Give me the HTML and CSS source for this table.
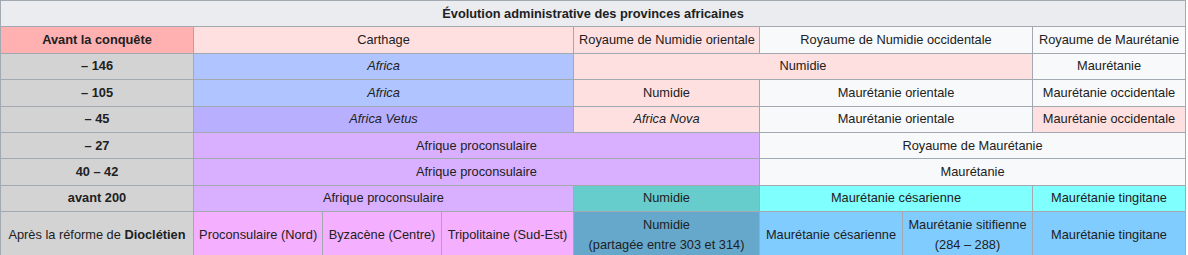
FILE: index.html
```html
<!DOCTYPE html>
<html lang="fr">
<head>
<meta charset="utf-8">
<title>Évolution administrative des provinces africaines</title>
<link rel="stylesheet" href="styles.css">
</head>
<body>
<table class="wikitable">
  <colgroup>
    <col class="c1"><col class="c2"><col class="c3"><col class="c4"><col class="c5"><col class="c6"><col class="c7"><col class="c8">
  </colgroup>
  <tr>
    <th colspan="8" class="head">Évolution administrative des provinces africaines</th>
  </tr>
  <tr>
    <th class="rose">Avant la conquête</th>
    <td colspan="3" class="pale">Carthage</td>
    <td class="pale">Royaume de Numidie orientale</td>
    <td colspan="2" class="white">Royaume de Numidie occidentale</td>
    <td class="white">Royaume de Maurétanie</td>
  </tr>
  <tr>
    <th class="gray">– 146</th>
    <td colspan="3" class="blue"><i>Africa</i></td>
    <td colspan="3" class="pale">Numidie</td>
    <td class="white">Maurétanie</td>
  </tr>
  <tr>
    <th class="gray">– 105</th>
    <td colspan="3" class="blue"><i>Africa</i></td>
    <td class="pale">Numidie</td>
    <td colspan="2" class="white">Maurétanie orientale</td>
    <td class="white">Maurétanie occidentale</td>
  </tr>
  <tr>
    <th class="gray">– 45</th>
    <td colspan="3" class="indigo"><i>Africa Vetus</i></td>
    <td class="pale"><i>Africa Nova</i></td>
    <td colspan="2" class="white">Maurétanie orientale</td>
    <td class="pale">Maurétanie occidentale</td>
  </tr>
  <tr>
    <th class="gray">– 27</th>
    <td colspan="4" class="violet">Afrique proconsulaire</td>
    <td colspan="3" class="white">Royaume de Maurétanie</td>
  </tr>
  <tr>
    <th class="gray">40 – 42</th>
    <td colspan="4" class="violet">Afrique proconsulaire</td>
    <td colspan="3" class="white">Maurétanie</td>
  </tr>
  <tr>
    <th class="gray">avant 200</th>
    <td colspan="3" class="violet">Afrique proconsulaire</td>
    <td class="teal">Numidie</td>
    <td colspan="2" class="cyan">Maurétanie césarienne</td>
    <td class="cyan">Maurétanie tingitane</td>
  </tr>
  <tr>
    <td class="gray">Après la réforme de <b>Dioclétien</b></td>
    <td class="magenta">Proconsulaire (Nord)</td>
    <td class="magenta">Byzacène (Centre)</td>
    <td class="magenta">Tripolitaine (Sud-Est)</td>
    <td class="steel">Numidie<br>(partagée entre 303 et 314)</td>
    <td class="sky">Maurétanie césarienne</td>
    <td class="sky">Maurétanie sitifienne<br>(284 – 288)</td>
    <td class="sky">Maurétanie tingitane</td>
  </tr>
</table>
</body>
</html>
```
FILE: styles.css
```css
html, body {
  margin: 0;
  padding: 0;
  background: #ffffff;
}

.wikitable {
  border-collapse: collapse;
  table-layout: fixed;
  width: 1185px;
  font-family: "Liberation Sans", Arial, sans-serif;
  font-size: 12.8px;
  line-height: 20.3px;
  color: #202122;
  background: #f8f9fa;
  border: 1px solid #a2a9b1;
}

.c1 { width: 193px; }
.c2 { width: 129px; }
.c3 { width: 119px; }
.c4 { width: 132px; }
.c5 { width: 186px; }
.c6 { width: 143px; }
.c7 { width: 130px; }
.c8 { width: 153px; }

.wikitable th,
.wikitable td {
  border: 1px solid #a2a9b1;
  padding: 2.56px 5.12px;
  text-align: center;
  vertical-align: middle;
  white-space: nowrap;
  overflow: hidden;
}

.wikitable th { font-weight: bold; }

.head { background: #eaecf0; }
.rose { background: #ffb0b0; }
.pale { background: #ffe0e0; }
.white { background: #f8f9fa; }
.gray { background: #d3d3d3; }
.blue { background: #b0c4ff; }
.indigo { background: #b8b0ff; }
.violet { background: #d8b0ff; }
.teal { background: #66cccc; }
.cyan { background: #80ffff; }
.magenta { background: #f4b0ff; }
.steel { background: #66a8cc; }
.sky { background: #80ccff; }
```
